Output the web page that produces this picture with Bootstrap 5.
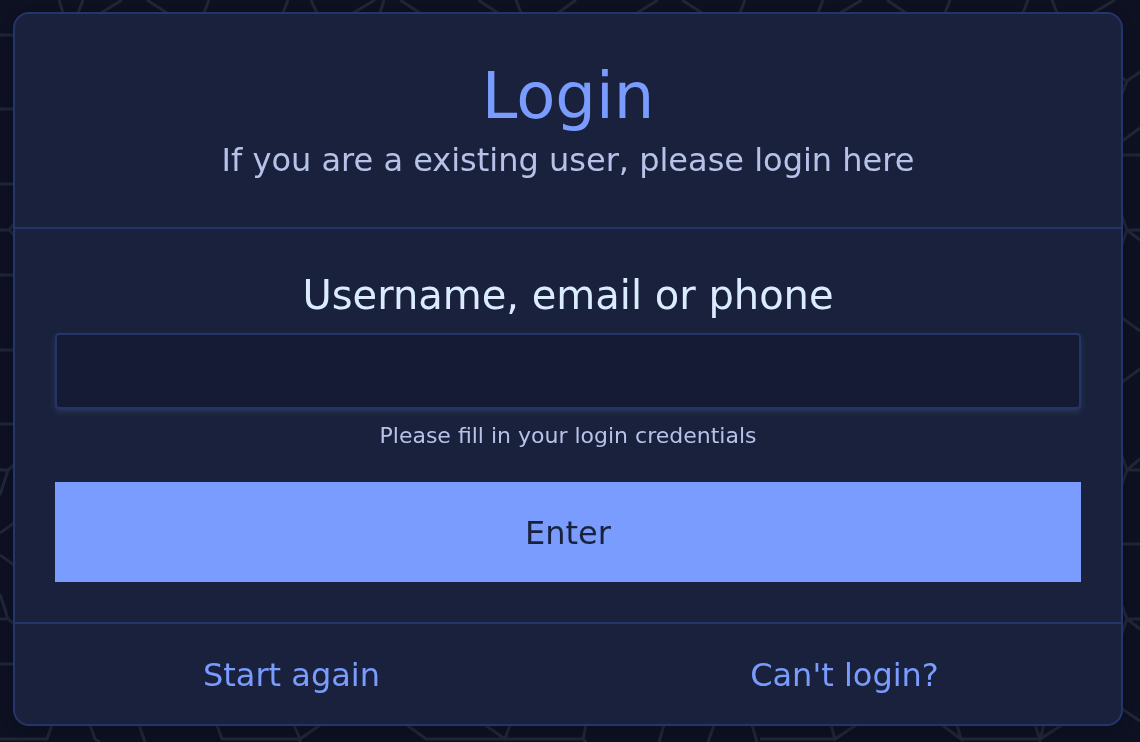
<!DOCTYPE html>
<html lang="en">
<head>
<meta charset="utf-8">
<meta name="viewport" content="width=device-width, initial-scale=1">
<title>Login</title>
<link href="https://cdn.jsdelivr.net/npm/bootstrap@5.3.0/dist/css/bootstrap.min.css" rel="stylesheet">
<style>
  body { background: #0d1122; color: #b6c2e7; font-family: Verdana, "DejaVu Sans", sans-serif; font-size: 32px; line-height: 48px; }
  .backdrop { position: fixed; inset: 0; width: 100%; height: 100%; z-index: -1; }
  main { padding: 12px 17px 16px 13px; }
  .login-card { --bs-card-bg: #19213d; --bs-card-color: #b6c2e7; border: 2px solid #23356b; border-radius: 16px; box-shadow: 0 4px 12px rgba(5, 12, 24, .3); }
  .login-card .card-header { background: none; border-bottom: 2px solid #23356b; padding: 42px 40px 43px; }
  .login-card h1 { color: #7a9cff; font-size: 64px; line-height: 80px; font-weight: 400; margin: 0; }
  .login-card .card-body { padding: 40px; }
  .login-card .form-label { color: #dcecff; font-size: 40px; line-height: 52px; margin: 0 0 12px; }
  .login-card .form-control { background: #151b35; color: #dcecff; border: 2px solid #23356b; border-radius: 4px; height: 76px; font-size: 32px; box-shadow: 0 3px 6px rgba(75, 90, 105, .4); }
  .login-card .form-text { color: #b6c2e7; font-size: 22px; line-height: 33px; margin: 10px 0 30px; }
  .login-card .btn { background: #7a9cff; color: #19213d; border: 0; border-radius: 0; font-size: 32px; line-height: 48px; padding: 27px 26px 25px; }
  .login-card .card-footer { background: none; border-top: 2px solid #23356b; padding: 27px 0 25px; }
  .login-card a { color: #7a9cff; text-decoration: none; }
</style>
</head>
<body>
<svg class="backdrop" viewBox="0 0 1140 742" preserveAspectRatio="none" fill="none" stroke="#8a8fa0" stroke-opacity=".17" stroke-width="3" aria-hidden="true">
  <!-- top edge -->
  <path d="M59 0l4 13M83 0l-5 13M122 0l-21 13M147 0l20 13M209 0l-5 13M288 0l-5 13M311 0l6 13M375 0l-22 13M384 0l-4 13M400 0l20 13M478 0l20 13M516 0l5 13M576 0l-18 13M658 0l-21 13M682 0l20 13M745 0l-5 13M823 0l-5 13M862 0l-22 13M887 0l19 13M950 0l-5 13M1028 0l-5 13M1052 0l5 13M1115 0l-22 13"/>
  <!-- left edge -->
  <path d="M0 35H14M0 109H14M0 184H14M0 230H9M14 224L9 230L14 235M0 275H14M0 350H14M0 424H14M0 470H8L14 465M8 470L0 495M14 523L0 533M0 555L14 565M0 594L8 619L14 624M0 619H8M0 664H14"/>
  <!-- right edge -->
  <path d="M1121 77L1127 81L1140 72M1127 81L1121 97M1121 142L1140 128M1121 155H1140M1121 213L1127 230L1121 247M1127 230H1140M1127 230L1140 240M1121 317L1140 331M1121 383L1140 369M1121 453L1127 470L1121 487M1127 470H1140M1127 470L1140 459M1121 544H1140M1121 603L1127 619L1121 636M1127 619H1140M1127 619L1140 629M1121 708L1140 721"/>
  <!-- bottom edge -->
  <path d="M0 739H47L52 725M90 725L95 739L100 742M139 725L145 742M217 725L222 739H300M294 725L300 739L320 725M300 739V742M407 725L426 739H505M485 725L505 739L510 725M505 739H583M586 725L583 739L586 742M664 725L659 742M714 725L708 742M752 725L757 742M760 739H835M831 725L835 739L856 725M942 725L961 739L957 725M961 739H1040M1035 725L1040 739L1044 725M1040 739L1062 725"/>
</svg>
<main>
  <form class="card login-card text-center">
    <div class="card-header">
      <h1>Login</h1>
      <div>If you are a existing user, please login here</div>
    </div>
    <div class="card-body">
      <label class="form-label d-block" for="user">Username, email or phone</label>
      <input class="form-control" type="text" id="user" aria-describedby="user-help">
      <div class="form-text" id="user-help">Please fill in your login credentials</div>
      <button class="btn w-100 d-block" type="submit">Enter</button>
    </div>
    <div class="card-footer">
      <div class="row g-0">
        <div class="col-6"><a href="#restart">Start again</a></div>
        <div class="col-6"><a href="#help">Can't login?</a></div>
      </div>
    </div>
  </form>
</main>
<script src="https://cdn.jsdelivr.net/npm/bootstrap@5.3.0/dist/js/bootstrap.bundle.min.js"></script>
</body>
</html>
